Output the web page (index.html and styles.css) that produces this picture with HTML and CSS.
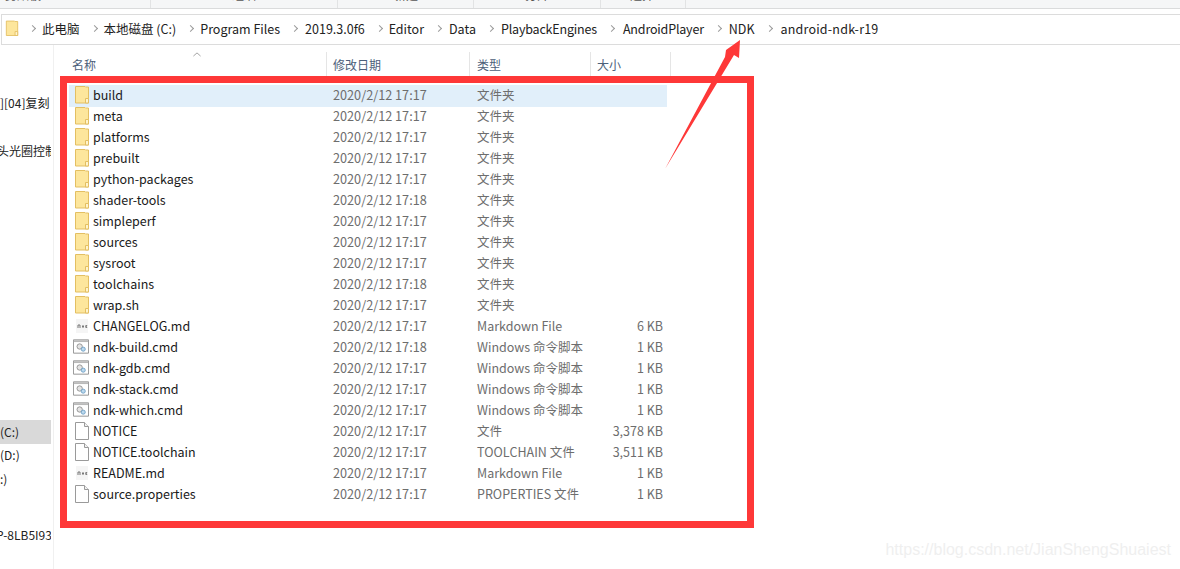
FILE: index.html
```html
<!DOCTYPE html>
<html lang="zh-CN">
<head>
  <meta charset="UTF-8">
  <title>android-ndk-r19</title>
  <link rel="stylesheet" href="styles.css">
</head>
<body>
  <svg width="0" height="0" class="defs">
    <symbol id="i-folder" viewBox="0 0 16 18">
      <path d="M1.5 .5h9.500l.5.5h3v16h-13z" fill="#fde69c" stroke="#e3bf62"/>
      <path d="M11.500 12.500h3v4.500h-3z" fill="#fff4cd" stroke="#e3bf62"/>
    </symbol>
    <symbol id="i-file" viewBox="0 0 16 18">
      <path d="M1.500 .5h9l4 4v13h-13z" fill="#fff" stroke="#9a9a9a"/>
      <path d="M10.500 .5v4h4" fill="#f2f2f2" stroke="#9a9a9a"/>
    </symbol>
    <symbol id="i-md" viewBox="0 0 16 18">
      <path d="M2 2h12v14H2z" fill="#f5f5f5"/>
      <path d="M4 8v3M6 8v3M4 8h2M9 8v3M8 9.500h2M12 8v3M13 8l-1 1.500 1 1.500" stroke="#777" fill="none"/>
    </symbol>
    <symbol id="i-cmd" viewBox="0 0 18 16">
      <path d="M.5 .5h17v15H.5z" fill="#fff" stroke="#8a8a8a"/>
      <path d="M1 1h16v2H1z" fill="#b9b9b9"/>
      <circle cx="7.500" cy="8" r="3" fill="#e4e4e4" stroke="#8f8f8f"/>
      <circle cx="11.500" cy="11" r="2.300" fill="#bcd9ee" stroke="#6f9fc4"/>
    </symbol>
  </svg>

  <div class="toolbar-edge">
    <span class="toolbar-cell cell-1"><span class="toolbar-label">剪贴板</span></span>
    <span class="toolbar-cell cell-2"><span class="toolbar-label">组织</span></span>
    <span class="toolbar-cell cell-3"><span class="toolbar-label">新建</span></span>
    <span class="toolbar-cell cell-4"><span class="toolbar-label">打开</span></span>
    <span class="toolbar-cell cell-5"><span class="toolbar-label">选择</span></span>
  </div>

  <nav class="address-bar">
    <svg class="address-icon"><use href="#i-folder"/></svg>
    <span class="crumb-sep"></span><span class="crumb">此电脑</span>
    <span class="crumb-sep"></span><span class="crumb">本地磁盘 (C:)</span>
    <span class="crumb-sep"></span><span class="crumb">Program Files</span>
    <span class="crumb-sep"></span><span class="crumb gap-1">2019.3.0f6</span>
    <span class="crumb-sep"></span><span class="crumb">Editor</span>
    <span class="crumb-sep"></span><span class="crumb gap-1">Data</span>
    <span class="crumb-sep"></span><span class="crumb gap-1 tight">PlaybackEngines</span>
    <span class="crumb-sep"></span><span class="crumb gap-2 tight">AndroidPlayer</span>
    <span class="crumb-sep"></span><span class="crumb gap-1">NDK</span>
    <span class="crumb-sep"></span><span class="crumb gap-2 loose">android-ndk-r19</span>
  </nav>

  <div class="explorer">
    <aside class="sidebar">
      <div class="side-item side-a">][04]复刻</div>
      <div class="side-item side-b">头光圈控制</div>
      <div class="side-item side-c">(C:)</div>
      <div class="side-item side-d">(D:)</div>
      <div class="side-item">:)</div>
      <div class="side-item side-f">P-8LB5I93</div>
    </aside>

    <main class="files">
      <svg class="sort-arrow" viewBox="0 0 10 5"><path d="M.5 4.500 5 .5l4.500 4" fill="none" stroke="#8e8e8e"/></svg>
      <div class="head">
        <div class="col col-name">名称</div>
        <div class="col col-date">修改日期</div>
        <div class="col col-type">类型</div>
        <div class="col col-size">大小</div>
      </div>
      <div id="rows"></div>
    </main>
  </div>

  <!-- 红色标注 -->
  <div class="mark-box"></div>
  <svg class="mark-arrow" viewBox="0 0 85 135"><path d="M5 133 L65 21 L66 14 L80 4 L79 22 L74 19 Z" fill="#fe3838"/></svg>

  <div class="watermark">https://blog.csdn.net/JianShengShuaiest</div>

  <script>
    // 文件列表
    const files = [
      ["build", "2020/2/12 17:17", "文件夹", "", "folder"],
      ["meta", "2020/2/12 17:17", "文件夹", "", "folder"],
      ["platforms", "2020/2/12 17:17", "文件夹", "", "folder"],
      ["prebuilt", "2020/2/12 17:17", "文件夹", "", "folder"],
      ["python-packages", "2020/2/12 17:17", "文件夹", "", "folder"],
      ["shader-tools", "2020/2/12 17:18", "文件夹", "", "folder"],
      ["simpleperf", "2020/2/12 17:17", "文件夹", "", "folder"],
      ["sources", "2020/2/12 17:17", "文件夹", "", "folder"],
      ["sysroot", "2020/2/12 17:17", "文件夹", "", "folder"],
      ["toolchains", "2020/2/12 17:18", "文件夹", "", "folder"],
      ["wrap.sh", "2020/2/12 17:17", "文件夹", "", "folder"],
      ["CHANGELOG.md", "2020/2/12 17:17", "Markdown File", "6 KB", "md"],
      ["ndk-build.cmd", "2020/2/12 17:18", "Windows 命令脚本", "1 KB", "cmd"],
      ["ndk-gdb.cmd", "2020/2/12 17:17", "Windows 命令脚本", "1 KB", "cmd"],
      ["ndk-stack.cmd", "2020/2/12 17:17", "Windows 命令脚本", "1 KB", "cmd"],
      ["ndk-which.cmd", "2020/2/12 17:17", "Windows 命令脚本", "1 KB", "cmd"],
      ["NOTICE", "2020/2/12 17:17", "文件", "3,378 KB", "file"],
      ["NOTICE.toolchain", "2020/2/12 17:17", "TOOLCHAIN 文件", "3,511 KB", "file"],
      ["README.md", "2020/2/12 17:17", "Markdown File", "1 KB", "md"],
      ["source.properties", "2020/2/12 17:17", "PROPERTIES 文件", "1 KB", "file"]
    ];

    const rows = document.getElementById("rows");
    files.forEach(function (f, i) {
      const row = document.createElement("div");
      row.className = "file-row" + (i === 0 ? " selected" : "");
      row.innerHTML =
        '<div class="cell-name"><svg class="file-icon icon-' + f[4] + '"><use href="#i-' + f[4] + '"/></svg>' + f[0] + '</div>' +
        '<div class="cell-date">' + f[1] + '</div>' +
        '<div class="cell-type">' + f[2] + '</div>' +
        '<div class="cell-size">' + f[3] + '</div>';
      rows.appendChild(row);
    });
  </script>
</body>
</html>
```

FILE: styles.css
```css
* {
  box-sizing: border-box;
}
html, body {
  height: 100%;
}
body {
  margin: 0;
  background: #fff;
  overflow: hidden;
  position: relative;
  font-family: "Noto Sans CJK SC", "Open Sans", "Noto Sans", sans-serif;
  font-size: 12px;
  color: #1a1a1a;
}
.defs {
  position: absolute;
}

/* 顶部工具栏残留 */
.toolbar-edge {
  height: 9px;
  display: flex;
  overflow: hidden;
  background: #f5f6f7;
  border-bottom: 1px solid #dadbdc;
}
.toolbar-cell {
  height: 8px;
  border-right: 1px solid #e2e3e4;
  overflow: hidden;
}
.toolbar-label {
  display: block;
  line-height: 16px;
  margin-top: -13px;
  color: #555;
}
.cell-1 { width: 151px; padding-left: 5px; }
.cell-2 { width: 187px; padding-left: 81px; }
.cell-3 { width: 136px; padding-left: 56px; }
.cell-4 { width: 127px; padding-left: 51px; }
.cell-5 { width: 85px; padding-left: 29px; }

/* 地址栏 */
.address-bar {
  height: 31px;
  margin: 5px 0 0 1px;
  padding: 0 0 2px 3px;
  display: flex;
  align-items: center;
  background: #fff;
  border: 1px solid #dcdcdc;
  border-right: none;
  font-size: 12.5px;
  color: #222;
}
.address-icon {
  width: 14px;
  height: 17px;
  margin-right: 2px;
  flex: none;
}
.crumb-sep {
  width: 5px;
  height: 5px;
  margin: 0 7px 0 9px;
  flex: none;
  border-top: 1.5px solid #9a9a9a;
  border-right: 1.5px solid #9a9a9a;
  transform: rotate(45deg);
}
.crumb {
  white-space: nowrap;
  margin-right: 3px;
}
.gap-1 { margin-left: 1px; }
.gap-2 { margin-left: 2px; }
.tight { letter-spacing: -0.18px; }
.loose { letter-spacing: 0.2px; }

.explorer {
  display: flex;
  height: 524px;
}

/* 左侧导航 */
.sidebar {
  width: 54px;
  flex: none;
  padding-top: 46px;
  border-right: 1px solid #f0f0f0;
  overflow: hidden;
  color: #222;
}
.side-item {
  width: 51px;
  height: 24px;
  line-height: 24px;
  white-space: nowrap;
  overflow: hidden;
}
.side-b {
  margin-top: 24px;
  text-indent: -3px;
}
.side-c {
  margin-top: 257px;
  background: #d9d9d9;
}
.side-d {
  margin-top: -1px;
}
.side-f {
  margin-top: 32px;
  text-indent: -4px;
}

/* 文件列表 */
.files {
  flex: 1;
  position: relative;
  padding-left: 15px;
}
.sort-arrow {
  position: absolute;
  left: 139px;
  top: 7px;
  width: 8px;
  height: 5px;
}
.head {
  display: grid;
  grid-template-columns: 255px 143px 121px 80px;
  height: 40px;
  padding-top: 7px;
  margin-left: 3px;
  color: #4c607a;
}
.col {
  height: 26px;
  line-height: 26px;
  padding-left: 6px;
  border-right: 1px solid #e5e5e5;
}
.col-name {
  padding-left: 0;
}
.col-type {
  padding-left: 7px;
}
.file-row {
  display: grid;
  grid-template-columns: 264px 144px 120px 70px;
  width: 598px;
  height: 21px;
  line-height: 19px;
  font-size: 12.5px;
  color: #6d6d6d;
  white-space: nowrap;
}
.file-row.selected {
  background: #e1effa;
  box-shadow: 0 1px 0 #e1effa;
}
.cell-name {
  display: flex;
  align-items: center;
  gap: 3px;
  padding: 0 0 2px 5px;
  color: #1a1a1a;
}
.cell-date {
  font-size: 12.7px;
}
.cell-size {
  text-align: right;
  padding-right: 4px;
}
.file-icon {
  width: 16px;
  height: 18px;
  flex: none;
}
.icon-cmd {
  width: 16px;
  height: 15px;
  margin: 0 1px 0 -1px;
}

/* 红色标注 */
.mark-box {
  position: absolute;
  left: 60px;
  top: 76px;
  width: 694px;
  height: 452px;
  border: 7px solid #fe3838;
}
.mark-arrow {
  position: absolute;
  left: 660px;
  top: 36px;
  width: 85px;
  height: 135px;
}
.watermark {
  position: absolute;
  right: 9px;
  top: 541px;
  font-family: "Liberation Sans", sans-serif;
  font-size: 16px;
  color: #efefef;
}
```
